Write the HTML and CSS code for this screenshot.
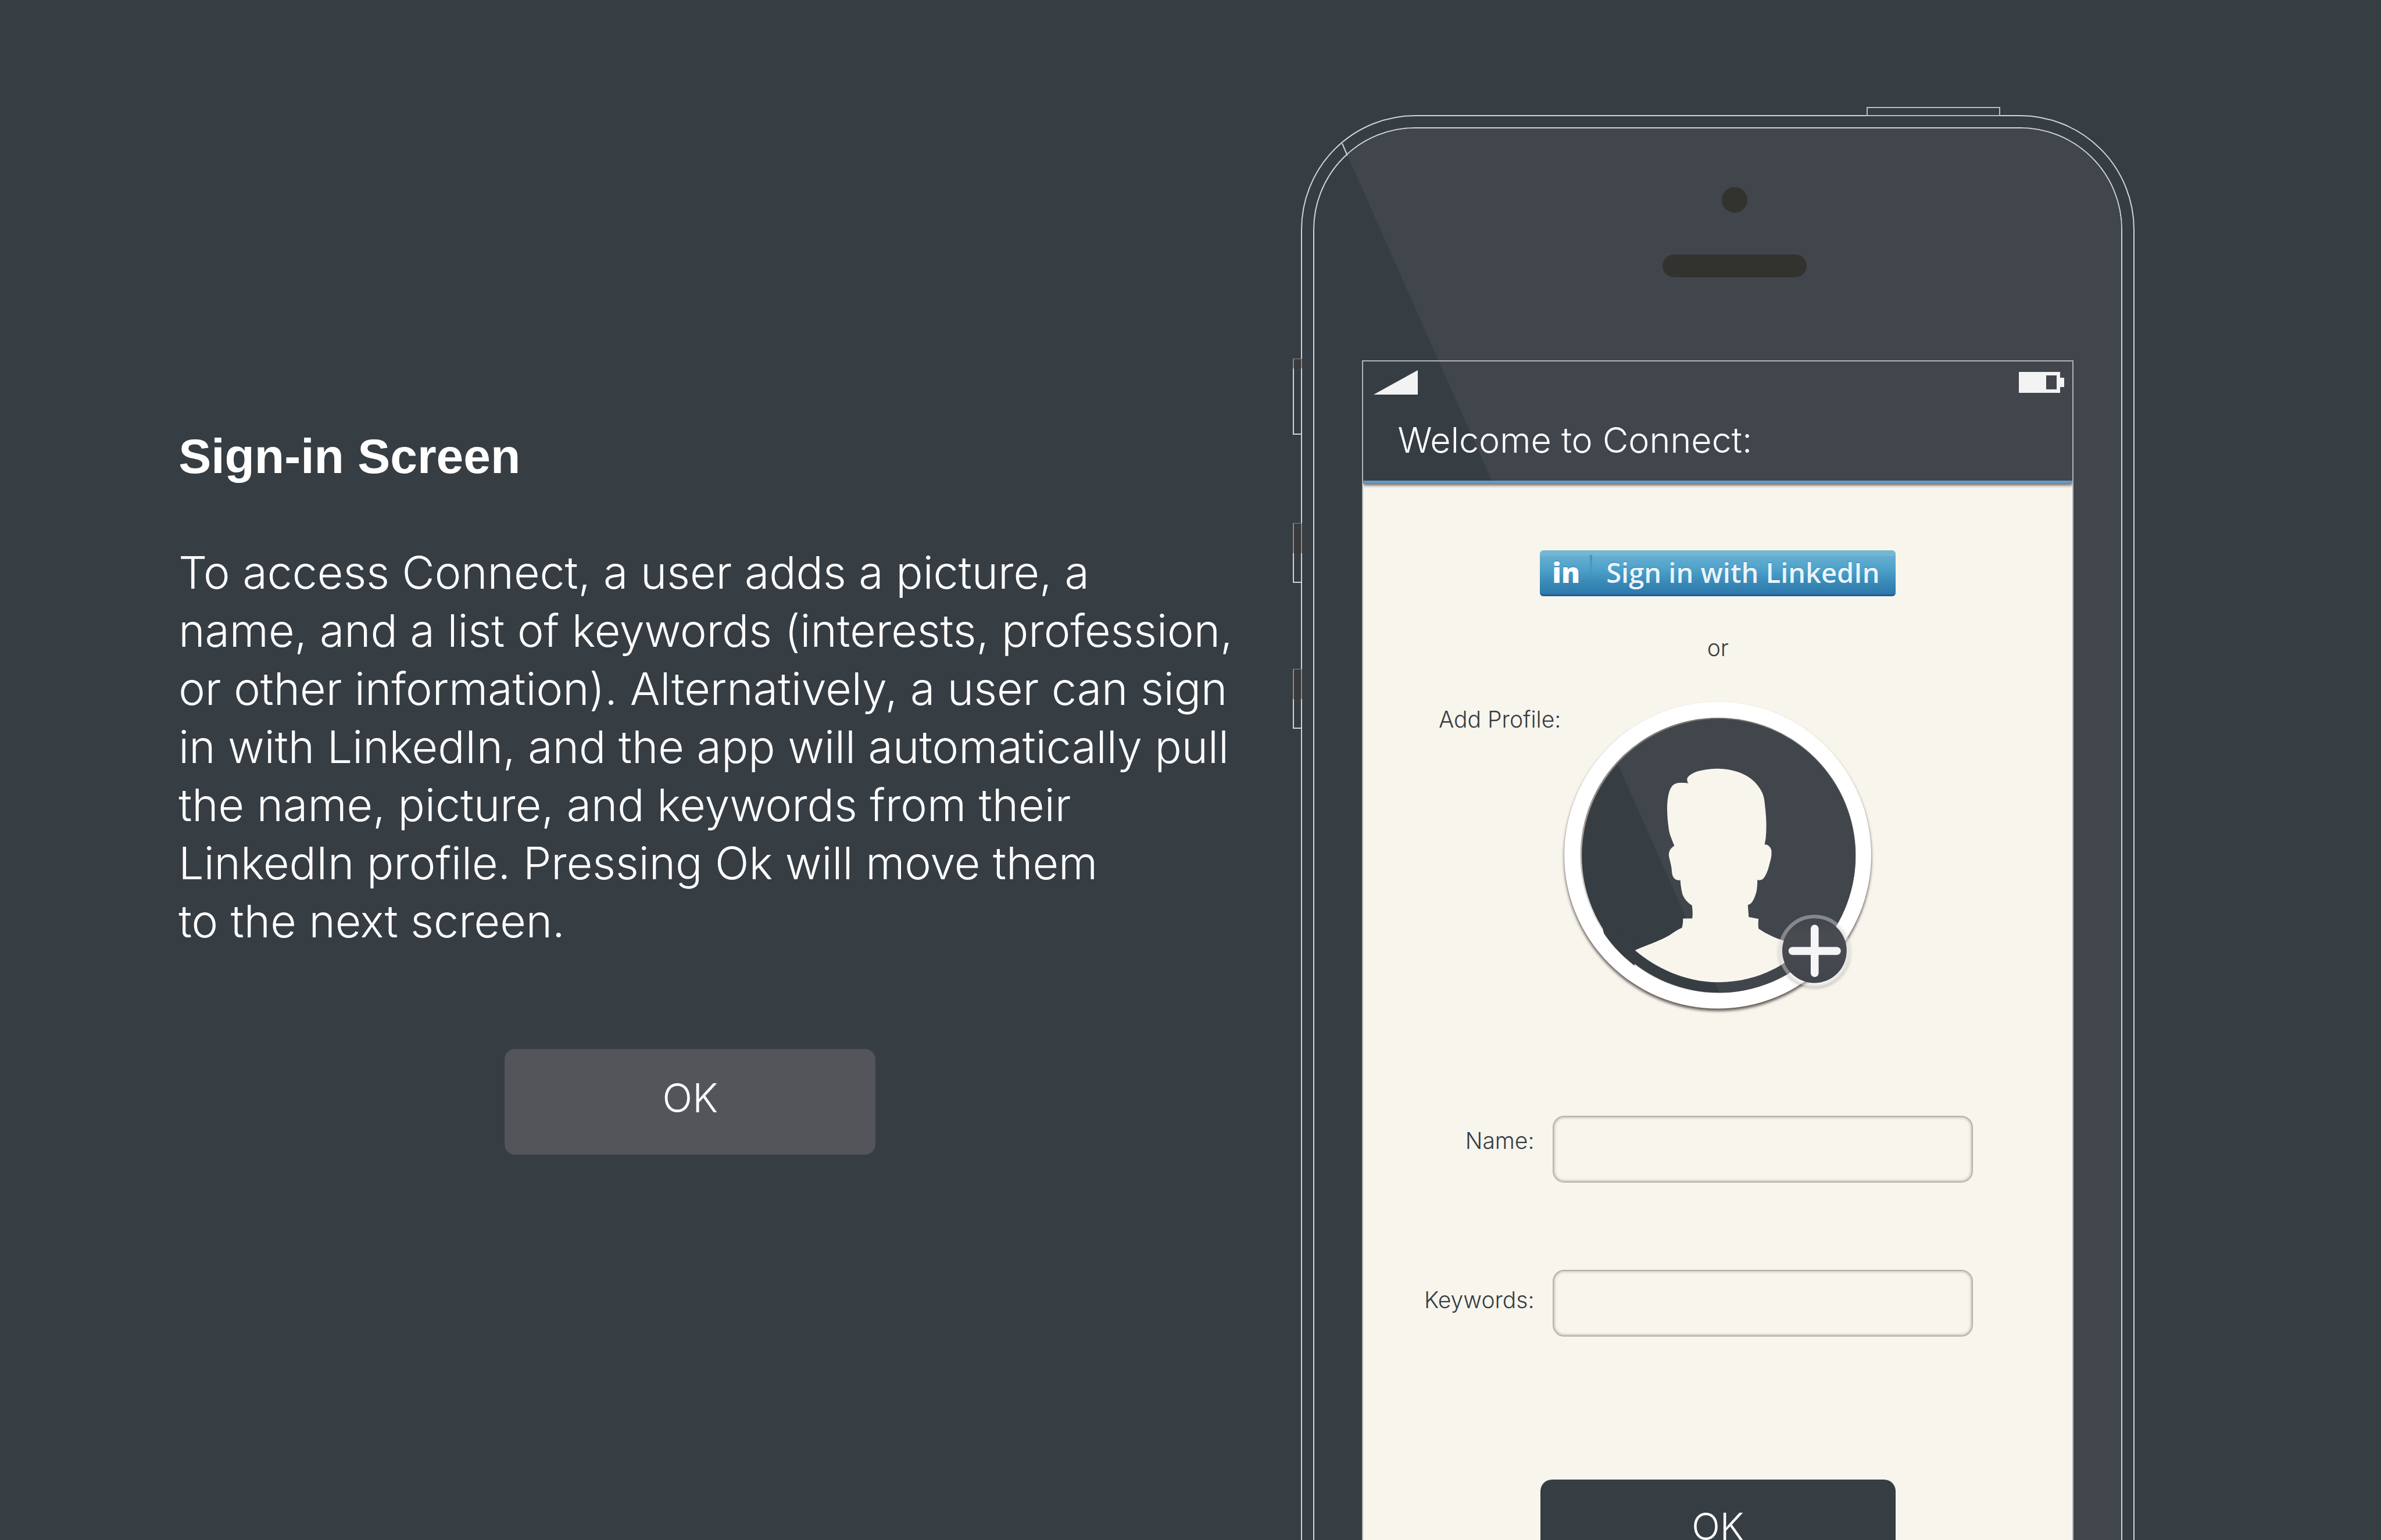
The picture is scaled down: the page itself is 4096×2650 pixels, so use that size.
FILE: index.html
```html
<!DOCTYPE html>
<html lang="en">
<head>
  <meta charset="utf-8">
  <meta name="viewport" content="width=device-width, initial-scale=1">
  <title>Connect – Sign-in Screen</title>
  <link rel="stylesheet" href="styles.css">
</head>
<body>
  <main class="page">
    <section class="intro">
      <h1 class="intro-title">Sign-in Screen</h1>
      <p class="intro-text">To access Connect, a user adds a picture, a<br>
        name, and a list of keywords (interests, profession,<br>
        or other information). Alternatively, a user can sign<br>
        in with LinkedIn, and the app will automatically pull<br>
        the name, picture, and keywords from their<br>
        LinkedIn profile. Pressing Ok will move them<br>
        to the next screen.</p>
      <button class="intro-ok" type="button">OK</button>
    </section>

    <section class="phone" aria-label="Phone preview">
      <span class="power-key"></span>
      <span class="side-key side-key-mute"></span>
      <span class="side-key side-key-up"></span>
      <span class="side-key side-key-down"></span>
      <svg class="edge-glint" viewBox="0 0 14 24" aria-hidden="true"><path d="M2 1 11 22"/></svg>

      <div class="face">
        <div class="sensors">
          <span class="camera"></span>
          <span class="speaker"></span>
        </div>

        <div class="screen">
          <header class="topbar">
            <div class="status">
              <svg class="signal" viewBox="0 0 76 42" aria-hidden="true"><path d="M0 42 76 0V42Z"/></svg>
              <svg class="battery" viewBox="0 0 78 36" aria-hidden="true"><path fill-rule="evenodd" d="M0 0H71V10H78V26H71V36H0ZM47 6V30H65V6Z"/></svg>
            </div>
            <h2 class="topbar-title">Welcome to Connect:</h2>
          </header>

          <form class="signin">
            <button class="linkedin" type="button">
              <span class="linkedin-logo">in</span>
              <span class="linkedin-text">Sign in with LinkedIn</span>
            </button>
            <p class="or">or</p>

            <div class="profile">
              <label class="profile-label" for="avatar">Add Profile:</label>
              <button class="avatar" id="avatar" type="button">
                <svg class="avatar-art" viewBox="3342 1497 672 672" aria-hidden="true">
                  <defs>
                    <clipPath id="disc"><circle cx="3680" cy="1834" r="293"/></clipPath>
                    <clipPath id="hole"><circle cx="3678.600" cy="1833" r="296"/></clipPath>
                    <linearGradient id="edge" x1="0" y1="0" x2="0" y2="1">
                      <stop offset="0" stop-color="#77716e"/>
                      <stop offset=".4" stop-color="#a39c97"/>
                      <stop offset=".7" stop-color="#e4ded8"/>
                    </linearGradient>
                    <linearGradient id="badge" x1="0" y1="0" x2="0" y2="1">
                      <stop offset="0" stop-color="#42464c"/>
                      <stop offset=".3" stop-color="#494c50"/>
                      <stop offset="1" stop-color="#41454c"/>
                    </linearGradient>
                  </defs>
                  <circle class="ring" cx="3678" cy="1832.500" r="328.500"/>
                  <circle cx="3678.600" cy="1833" r="295" fill="url(#edge)"/>
                  <g clip-path="url(#disc)">
                    <path fill="#363d43" d="M3380 1530H3980V2130H3380Z"/>
                    <path fill="#41454c" d="M3416 1530H3980V2130H3683Z"/>
                  </g>
                  <path clip-path="url(#hole)" fill="#363d43" d="M3432 1990Q3440 2030 3465 2046L3500 2070 3500 2000Z"/>
                  <g transform="translate(3300 1480) scale(.4783 .4592)">
                    <path fill="#f8f5ed" d="M420 1211C500 1176 550 1160 590 1130Q615 1112 630 1106Q635 1090 635 1063L676 1063Q680 1040 675 1002C650 985 638 965 632 948Q624 915 623 884Q600 888 590 867C583 850 586 835 582 820C578 795 572 780 571 765Q572 738 596 723C585 695 575 670 572 652Q563 590 564 540C568 440 595 430 625 430Q645 429 661 433Q653 430 653 410C670 375 735 365 793 364C880 366 930 400 955 425C990 465 998 490 1001 530Q1012 620 1005 690L1000 718Q1020 716 1030 742C1034 775 1025 795 1018 825C1008 860 995 884 980 884Q972 885 968 882Q968 915 963 940C950 985 940 995 925 1000L929 1056Q950 1060 973 1065Q970 1090 973 1110Q1020 1145 1085 1166L1165 1205C1090 1285 960 1360 793 1360C640 1360 510 1290 420 1211Z"/>
                  </g>
                  <circle class="badge-ring" cx="3885" cy="2037" r="73"/>
                  <circle cx="3885" cy="2037" r="69" fill="url(#badge)"/>
                  <path class="plus" d="M3838 2037.500H3933M3885.500 1990V2085"/>
                </svg>
              </button>
            </div>

            <div class="field field-name">
              <label for="name">Name:</label>
              <input id="name" type="text">
            </div>
            <div class="field field-keywords">
              <label for="keywords">Keywords:</label>
              <input id="keywords" type="text">
            </div>
            <button class="signin-ok" type="button">OK</button>
          </form>
        </div>
      </div>
    </section>
  </main>
</body>
</html>
```
FILE: styles.css
```css
:root {
  --bg: #363d43;
  --glare: #41454c;
  --line: #d2d4d4;
  --cream: #f8f5ed;
  --ink: #363d43;
}

* { box-sizing: border-box; }

body {
  margin: 0;
  background: var(--bg);
  color: #fff;
  font-family: Inter, "Liberation Sans", sans-serif;
  font-weight: 300;
}

h1, h2, p { margin: 0; }

button, input {
  border: 0;
  padding: 0;
  color: inherit;
  font: inherit;
}

.page {
  display: grid;
  grid-template-columns: minmax(0, 1fr) 35vw;
  height: 100vh;
  padding: 0 10.35vw 0 7.5vw;
  overflow: hidden;
}

/* Description column */

.intro {
  display: flex;
  flex-direction: column;
  padding: 735px 171px 0 0;
}

.intro-title {
  font: 700 84px/100px "Liberation Sans", sans-serif;
}

.intro-text {
  margin-top: 100px;
  font-size: 77px;
  line-height: 100px;
  white-space: nowrap;
}

.intro-ok {
  align-self: center;
  width: 638px;
  height: 182px;
  margin-top: 170px;
  padding-bottom: 14px;
  border-radius: 18px;
  background: #53555a;
  font-size: 68px;
}

/* Phone outline */

.phone {
  position: relative;
  align-self: start;
  margin-top: 198px;
  padding: 19px;
  border: 2px solid var(--line);
  border-radius: 197px;
}

.power-key {
  position: absolute;
  top: -16px;
  right: 229px;
  width: 230px;
  height: 16px;
  border: 2px solid #b9bbbc;
}

.side-key {
  position: absolute;
  left: -16px;
  width: 16px;
  border: 2px solid var(--line);
}

.side-key::before {
  content: "";
  position: absolute;
  inset: -2px -2px auto;
  height: var(--cap);
  border: solid #8b8788;
  border-width: 1px 2px 0;
  background: #3b3a3a;
}

.side-key-mute { top: 417px; height: 131px; --cap: 16px; }
.side-key-up { top: 700px; height: 103px; --cap: 51px; }
.side-key-down { top: 951px; height: 103px; --cap: 51px; }

.edge-glint {
  position: absolute;
  top: 46px;
  left: 67px;
  width: 14px;
  height: 24px;
  fill: none;
  stroke: var(--line);
  stroke-width: 2;
}

.face {
  position: relative;
  padding: 101px 82px 320px;
  border: 2px solid var(--line);
  border-radius: 176px;
  overflow: hidden;
}

.face::before {
  content: "";
  position: absolute;
  inset: 0;
  height: 2430px;
  background: var(--glare);
  clip-path: polygon(36px 0, 100% 0, 100% 100%, 1113px 100%);
}

.sensors {
  position: relative;
  display: flex;
  flex-direction: column;
  align-items: center;
  gap: 72px;
  padding-left: 58px;
}

.camera {
  width: 44px;
  height: 44px;
  border-radius: 50%;
  background: #32322f;
}

.speaker {
  width: 248px;
  height: 39px;
  border-radius: 20px;
  background: #32322f;
}

/* App screen */

.screen {
  position: relative;
  margin-top: 143px;
  border: 2px solid #b4b4b6;
}

.topbar {
  position: relative;
  padding: 15px 14px 32px 18px;
  border-bottom: 5px solid #6499c6;
  box-shadow: 0 3px 5px rgba(60, 50, 45, 0.75);
  clip-path: inset(0 0 -12px);
  z-index: 1;
}

.status {
  display: flex;
  justify-content: space-between;
  align-items: center;
  fill: #f3f3f3;
}

.signal { width: 76px; height: 42px; }
.battery { width: 78px; height: 36px; }

.topbar-title {
  margin: 40px 0 0 41px;
  font-size: 61px;
  font-weight: 300;
  line-height: 76px;
}

.signin {
  display: flex;
  flex-direction: column;
  align-items: center;
  padding: 115px 0 160px;
  background: var(--cream);
  color: var(--ink);
  font-size: 39px;
  line-height: 48px;
}

.linkedin {
  display: flex;
  align-items: center;
  width: 612px;
  height: 79px;
  border-bottom: 3px solid #215c92;
  border-radius: 6px;
  background: linear-gradient(#74b6d4 0 9px, #66aed1 10px, #4fa3cb 40%, #3888b6 75%, #2d78ac);
  color: #eaf4fb;
  font: 600 47px/60px "Open Sans", sans-serif;
  text-shadow: 0 -1px 1px #2f79ab;
}

.linkedin-logo {
  width: 90px;
  padding-left: 21px;
  border-right: 4px solid;
  border-image: linear-gradient(#4d8bb8, #4d8bb800 75%) 1;
  color: #fff;
  font-size: 48px;
  font-weight: 800;
  text-align: left;
}

.linkedin-text { padding-left: 24px; }

.or { margin-top: 65px; }

.profile {
  display: grid;
  grid-template-columns: 1fr auto 1fr;
  width: 100%;
  margin-top: 63px;
}

.profile-label {
  justify-self: end;
  padding-top: 12px;
}

.avatar {
  width: 540px;
  height: 540px;
  border-radius: 50%;
  background: none;
}

.avatar-art {
  display: block;
  width: 100%;
  height: 100%;
  overflow: visible;
}

.ring {
  fill: #fff;
  filter: drop-shadow(0 5px 3px rgba(75, 65, 62, 0.9));
}

.badge-ring {
  fill: none;
  stroke: rgba(255, 255, 255, 0.36);
  stroke-width: 8;
  filter: drop-shadow(0 4px 3px rgba(75, 65, 62, 0.7));
}

.plus {
  fill: none;
  stroke: #f5f5f8;
  stroke-width: 17;
  stroke-linecap: round;
}

.field {
  display: grid;
  grid-template-columns: 294px 1fr;
  gap: 32px;
  width: 100%;
  padding-right: 171px;
  text-align: right;
}

.field-name { margin-top: 178px; }
.field-name label { padding-top: 19px; }
.field-keywords { margin-top: 150px; }
.field-keywords label { padding-top: 28px; }

.field input {
  width: 100%;
  height: 115px;
  padding: 0 24px;
  border: 2px solid #b7b3ab;
  border-radius: 20px;
  background: var(--cream);
  box-shadow: inset 0 0 4px 1px rgba(110, 100, 90, 0.45);
}

.signin-ok {
  width: 611px;
  height: 176px;
  margin-top: 246px;
  padding-bottom: 14px;
  border-radius: 20px;
  background: var(--ink);
  color: #fff;
  font-size: 64px;
}
```
